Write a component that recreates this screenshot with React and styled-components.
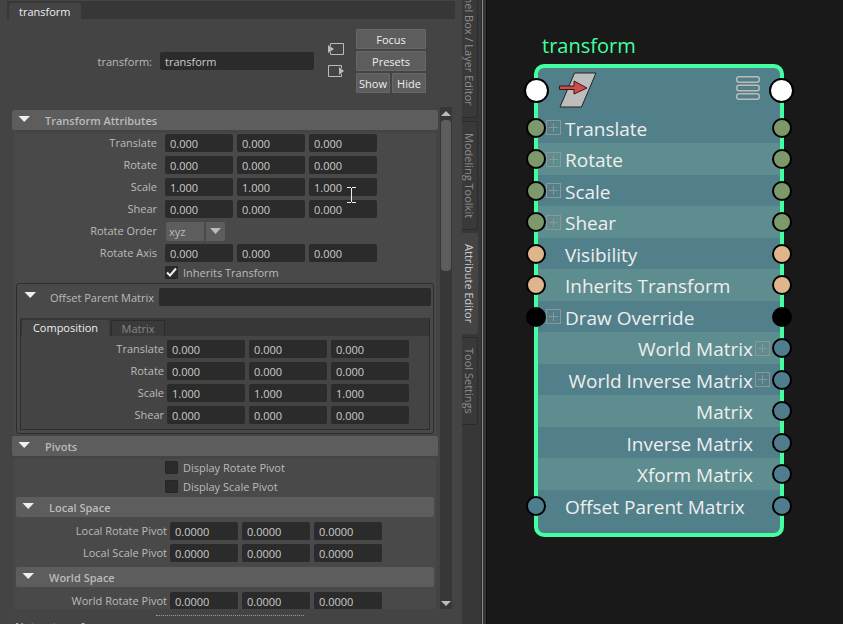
import React from 'react';
import styled, { createGlobalStyle, css } from 'styled-components';

const GlobalStyle = createGlobalStyle`
  * { box-sizing: border-box; }
  body {
    margin: 0;
    background: #191919;
    font-family: "Open Sans", "Noto Sans", sans-serif;
    font-size: 11px;
    color: #bbb;
  }
  button, input, select { font: inherit; color: inherit; margin: 0; }
`;

const Workspace = styled.main`
  display: grid;
  grid-template-columns: minmax(0, 487fr) minmax(0, 356fr);
  height: 100vh;
  overflow: hidden;
`;

const Dock = styled.section`
  display: flex;
  min-width: 0;
  min-height: 0;
  background: #444;
`;

const Editor = styled.div`
  flex: 1;
  min-width: 0;
  display: flex;
  flex-direction: column;
  padding: 1px 7px 0;
  overflow: hidden;
`;

const NodeTabs = styled.div`
  flex: none;
  height: 18px;
  padding: 2px 2px 0;
  background: #373737;
`;

const NodeTab = styled.button`
  height: 16px;
  padding: 2px 10px 0;
  border: 0;
  border-radius: 2px 2px 0 0;
  background: #444;
  color: #eee;
  line-height: 14px;
`;

const Header = styled.div`
  flex: none;
  display: flex;
  align-items: center;
  padding: 10px 29px 14px 0;
`;

const NameLabel = styled.label`
  width: 145px;
  margin-right: 8px;
  text-align: right;
`;

const Field = styled.input`
  width: ${(p) => (p.$wide ? 78 : 68)}px;
  height: 18px;
  padding: 1px 5px;
  border: 0;
  border-radius: 2px;
  background: #2b2b2b;
  color: #ccc;
  line-height: 16px;
  outline: 0;
  ${(p) =>
    p.$grow &&
    css`
      flex: 1;
      width: auto;
      min-width: 0;
    `}
`;

const ConnectionButtons = styled.div`
  display: flex;
  flex-direction: column;
  gap: 8px;
  margin: 0 12px 2px 14px;
`;

const IconButton = styled.button`
  display: block;
  padding: 0;
  border: 0;
  background: none;
  line-height: 0;
`;

const Actions = styled.div`
  display: grid;
  grid-template-columns: 34px 34px;
  grid-auto-rows: 20px;
  gap: 2px;
`;

const ActionButton = styled.button`
  grid-column: span ${(p) => p.$span || 1};
  padding: 2px 0 0;
  border: 1px solid #686868;
  border-radius: 1px;
  background: #5d5d5d;
  color: #eee;
  line-height: 16px;
`;

const Scroller = styled.div`
  flex: none;
  height: calc(100vh - 122px);
  min-height: 0;
  display: flex;
  gap: 2px;
  padding: 0 3px 0 5px;
`;

const Sections = styled.div`
  flex: 1;
  min-width: 0;
  padding-top: 3px;
  overflow: hidden;
`;

const ScrollTrack = styled.div`
  width: 12px;
  display: flex;
  flex-direction: column;
  align-items: center;
  background: #373737;
`;

const ScrollArrow = styled(IconButton)`
  height: 13px;
`;

const ScrollThumb = styled.div`
  width: 10px;
  height: 30%;
  margin-bottom: auto;
  border-radius: 4px;
  background: #5d5d5d;
`;

const SectionHeader = styled.button`
  display: flex;
  align-items: center;
  gap: 15px;
  width: 100%;
  height: 20px;
  padding: 2px 6px 0;
  border: 0;
  border-radius: 2px;
  background: #5d5d5d;
  font-weight: 600;
  line-height: 18px;
  text-align: left;
`;

const SectionBody = styled.div`
  margin: 3px 2px 2px;
  padding: ${(p) => p.$pad || '1px 0 0'};
  background: #494949;
`;

const Nested = styled.div`
  padding: 0 2px;
`;

const NestedRows = styled.div`
  padding: 5px 0 1px;
`;

const Row = styled.div`
  display: flex;
  align-items: center;
  height: 18px;
  margin-bottom: 4px;
  gap: 4px;
`;

const RowLabel = styled.label`
  width: ${(p) => p.$width}px;
  margin-right: ${(p) => p.$gap}px;
  text-align: right;
  line-height: 16px;
  white-space: nowrap;
`;

const FieldWrap = styled.div`
  position: relative;
  display: flex;
`;

const TextCursor = styled.svg`
  position: absolute;
  z-index: 1;
  left: 38px;
  top: 9px;
  pointer-events: none;
`;

const SelectWrap = styled.div`
  position: relative;
  display: flex;
  margin-left: 1px;
`;

const Select = styled.select`
  appearance: none;
  width: 59px;
  height: 19px;
  padding: 1px 3px 0;
  border: 0;
  border-radius: 2px;
  background: linear-gradient(90deg, #5d5d5d 38px, #4b4b4b 38px, #4b4b4b 40px, #5d5d5d 40px);
`;

const SelectArrow = styled.svg`
  position: absolute;
  right: 4px;
  top: 6px;
  pointer-events: none;
`;

const CheckRow = styled.label`
  display: flex;
  align-items: center;
  gap: 5px;
  height: 13px;
  margin: 0 0 ${(p) => p.$after}px 151px;
`;

const CheckWrap = styled.span`
  position: relative;
  display: flex;
`;

const CheckInput = styled.input`
  appearance: none;
  width: 13px;
  height: 13px;
  border: 1px solid #262626;
  border-radius: 1px;
  background: #2b2b2b;
  & + svg { display: none; }
  &:checked + svg { display: block; }
`;

const CheckMark = styled.svg`
  position: absolute;
  inset: 0;
  pointer-events: none;
`;

const Group = styled.div`
  margin: 0 2px;
  padding: 4px 2px 3px 3px;
  border: 1px solid #2d2d2d;
  border-radius: 3px;
`;

const GroupHeader = styled.div`
  display: flex;
  align-items: center;
  padding-left: 4px;
`;

const GroupLabel = styled.label`
  width: 109px;
  margin-left: 14px;
  white-space: nowrap;
`;

const TabBox = styled.div`
  margin: 12px 1px 0 0;
  border: 1px solid #2d2d2d;
  border-top: 0;
  background: #444;
`;

const TabStrip = styled.div`
  display: flex;
  gap: 2px;
  height: 18px;
  padding: 2px 1px 0;
  background: #373737;
`;

const Tab = styled.button`
  width: ${(p) => p.$width}px;
  padding: 0;
  border: ${(p) => (p.$active ? '0' : '1px solid #2b2b2b')};
  border-bottom: 0;
  border-radius: 2px 2px 0 0;
  background: ${(p) => (p.$active ? '#444' : '#3a3a3a')};
  color: ${(p) => (p.$active ? '#eee' : '#888')};
  line-height: 16px;
`;

const TabBody = styled.div`
  padding: 4px 0 1px;
`;

const Splitter = styled.div`
  width: 148px;
  margin: 6px auto 4px 149px;
  border-top: 1px dotted #999;
`;

const NotesLabel = styled.div`
  padding-left: 8px;
  font-weight: 600;
  line-height: 14px;
`;

const Rail = styled.div`
  flex: none;
  display: flex;
  flex-direction: column;
  width: 19px;
  padding-right: 3px;
  background: #373737;
`;

const RailTab = styled.button`
  display: flex;
  align-items: flex-end;
  justify-content: ${(p) => (p.$clipped ? 'flex-end' : 'center')};
  height: ${(p) => p.$length}px;
  margin-bottom: 3px;
  padding: ${(p) => (p.$clipped ? '0 0 11px' : '0')};
  border: 1px solid ${(p) => (p.$active ? '#444' : '#2b2b2b')};
  border-left: 0;
  border-top-width: ${(p) => (p.$clipped ? 0 : 1)}px;
  border-radius: 0 3px 3px 0;
  background: ${(p) => (p.$active ? '#444' : '#393939')};
  color: ${(p) => (p.$active ? '#ccc' : '#8c8c8c')};
  writing-mode: vertical-rl;
  white-space: nowrap;
  overflow: hidden;
  line-height: 14px;
`;

const Divider = styled.div`
  flex: none;
  width: 6px;
  background: linear-gradient(90deg, #2b2b2b 1px, #888 1px, #888 2px, #333 2px, #333 5px, #111 5px);
`;

const Graph = styled.section`
  min-width: 0;
  padding: 30px 59px 0 47px;
  background: #191919;
  font-size: 20px;
`;

const NodeTitle = styled.h1`
  margin: 0;
  padding-left: 8px;
  height: 34px;
  color: #43ffa1;
  font-size: 20px;
  font-weight: 400;
  line-height: 32px;
`;

const NodeCard = styled.article`
  padding-bottom: 12px;
  border: 4px solid #43ffa1;
  border-radius: 10px;
  background: #52808a;
`;

const NodeHeader = styled.div`
  display: flex;
  align-items: center;
  height: 44px;
`;

const Port = styled.span`
  flex: none;
  width: ${(p) => (p.$large ? 25 : 20)}px;
  height: ${(p) => (p.$large ? 25 : 20)}px;
  margin: ${(p) => (p.$large ? '0 -14px' : '0 -12px')};
  border: 2px solid #000;
  border-radius: 50%;
  background: ${(p) => p.$color};
  ${(p) => (p.$side === 'left' ? 'margin-right: 0;' : 'margin-left: 0;')}
`;

const TransformIcon = styled.svg`
  margin-left: 10px;
`;

const MenuButton = styled(IconButton)`
  margin: 0 9px 4px auto;
`;

const Attributes = styled.ul`
  margin: 0;
  padding: 0;
  list-style: none;
`;

const Attribute = styled.li`
  display: flex;
  align-items: center;
  height: 31px;
  color: #eee;
  &:nth-child(even) {
    height: 32px;
    background: #5e8d90;
  }
`;

const AttributeName = styled.span`
  flex: 1;
  min-width: 0;
  padding-top: 2px;
  text-align: ${(p) => (p.$output ? 'right' : 'left')};
  font-size: 19px;
  line-height: 28px;
  white-space: nowrap;
`;

const ExpandSlot = styled.span`
  flex: none;
  display: flex;
  width: 19px;
  padding-left: ${(p) => (p.$side === 'right' ? 2 : 0)}px;
`;

const PortGap = styled.span`
  flex: none;
  width: 8px;
`;

const Caret = ({ color = '#eee' }) => (
  <svg width="12" height="10" viewBox="0 0 12 10" aria-hidden="true">
    <path d="M0.5 0H12L6.2 6Z" fill={color} />
  </svg>
);

const Expander = ({ name }) => (
  <IconButton aria-label={`Expand ${name}`}>
    <svg width="15" height="15" viewBox="0 0 15 15" fill="none" stroke="#929597" strokeWidth="1">
      <rect x="0.5" y="0.5" width="14" height="14" />
      <path d="M7.5 3V12M3 7.5H12" />
    </svg>
  </IconButton>
);

function VectorRow({ id, label, value, labelWidth, gap, wide, cursor }) {
  return (
    <Row>
      <RowLabel htmlFor={`${id}-x`} $width={labelWidth} $gap={gap}>{label}</RowLabel>
      {['x', 'y', 'z'].map((axis) => (
        <FieldWrap key={axis}>
          <Field id={`${id}-${axis}`} aria-label={`${label} ${axis}`} defaultValue={value} $wide={wide} />
          {cursor && axis === 'z' && (
            <TextCursor width="10" height="17" viewBox="0 0 10 17" fill="none" stroke="#eee" aria-hidden="true">
              <path d="M0 0.5H4M5 0.5H9M0 15.5H4M5 15.5H9M4.5 1V15" />
            </TextCursor>
          )}
        </FieldWrap>
      ))}
    </Row>
  );
}

function Check({ label, checked, after }) {
  return (
    <CheckRow $after={after}>
      <CheckWrap>
        <CheckInput type="checkbox" defaultChecked={checked} />
        <CheckMark width="13" height="13" viewBox="0 0 13 13" fill="none" stroke="#eee" strokeWidth="2">
          <path d="M2 6.5L5 9.5L11 2.5" />
        </CheckMark>
      </CheckWrap>
      {label}
    </CheckRow>
  );
}

const GREEN = '#7d996c';
const PEACH = '#deb58c';
const BLACK = '#000';
const BLUE = '#507d8d';

const attributes = [
  { name: 'Translate', color: GREEN, input: true, expand: true },
  { name: 'Rotate', color: GREEN, input: true, expand: true },
  { name: 'Scale', color: GREEN, input: true, expand: true },
  { name: 'Shear', color: GREEN, input: true, expand: true },
  { name: 'Visibility', color: PEACH, input: true },
  { name: 'Inherits Transform', color: PEACH, input: true },
  { name: 'Draw Override', color: BLACK, input: true, expand: true },
  { name: 'World Matrix', color: BLUE, expand: true },
  { name: 'World Inverse Matrix', color: BLUE, expand: true },
  { name: 'Matrix', color: BLUE },
  { name: 'Inverse Matrix', color: BLUE },
  { name: 'Xform Matrix', color: BLUE },
  { name: 'Offset Parent Matrix', color: BLUE, input: true },
];

const railTabs = [
  { name: 'Channel Box / Layer Editor', length: 118, clipped: true },
  { name: 'Modeling Toolkit', length: 109 },
  { name: 'Attribute Editor', length: 101, active: true },
  { name: 'Tool Settings', length: 88 },
];

function AttributeEditor() {
  return (
    <Editor>
      <NodeTabs><NodeTab>transform</NodeTab></NodeTabs>
      <Header>
        <NameLabel htmlFor="node-name">transform:</NameLabel>
        <Field id="node-name" defaultValue="transform" $grow />
        <ConnectionButtons>
          <IconButton aria-label="Go to input connection">
            <svg width="16" height="14" viewBox="0 0 16 14">
              <path d="M2.5 4V1.5H15.5V12.5H2.5V10" fill="none" stroke="#bbb" />
              <path d="M0 3L6 7L0 11Z" fill="#bbb" />
            </svg>
          </IconButton>
          <IconButton aria-label="Go to output connection">
            <svg width="16" height="14" viewBox="0 0 16 14">
              <path d="M13.5 4V1.5H0.5V12.5H13.5V10" fill="none" stroke="#bbb" />
              <path d="M11 3L16 7L11 11Z" fill="#bbb" />
            </svg>
          </IconButton>
        </ConnectionButtons>
        <Actions>
          <ActionButton $span={2}>Focus</ActionButton>
          <ActionButton $span={2}>Presets</ActionButton>
          <ActionButton>Show</ActionButton>
          <ActionButton>Hide</ActionButton>
        </Actions>
      </Header>
      <Scroller>
        <Sections>
          <SectionHeader><Caret />Transform Attributes</SectionHeader>
          <SectionBody>
            <VectorRow id="translate" label="Translate" value="0.000" labelWidth={143} gap={4} />
            <VectorRow id="rotate" label="Rotate" value="0.000" labelWidth={143} gap={4} />
            <VectorRow id="scale" label="Scale" value="1.000" labelWidth={143} gap={4} cursor />
            <VectorRow id="shear" label="Shear" value="0.000" labelWidth={143} gap={4} />
            <Row>
              <RowLabel htmlFor="rotate-order" $width={143} $gap={4}>Rotate Order</RowLabel>
              <SelectWrap>
                <Select id="rotate-order"><option>xyz</option></Select>
                <SelectArrow width="11" height="6" viewBox="0 0 11 6">
                  <path d="M0 0H11L5.5 6Z" fill="#bbb" />
                </SelectArrow>
              </SelectWrap>
            </Row>
            <VectorRow id="rotate-axis" label="Rotate Axis" value="0.000" labelWidth={143} gap={4} />
            <Check label="Inherits Transform" checked after={4} />
            <Group>
              <GroupHeader>
                <Caret />
                <GroupLabel htmlFor="offset-parent">Offset Parent Matrix</GroupLabel>
                <Field id="offset-parent" $grow />
              </GroupHeader>
              <TabBox>
                <TabStrip>
                  <Tab $active $width={87}>Composition</Tab>
                  <Tab $width={54}>Matrix</Tab>
                </TabStrip>
                <TabBody>
                  <VectorRow id="opm-translate" label="Translate" value="0.000" labelWidth={143} gap={-1} wide />
                  <VectorRow id="opm-rotate" label="Rotate" value="0.000" labelWidth={143} gap={-1} wide />
                  <VectorRow id="opm-scale" label="Scale" value="1.000" labelWidth={143} gap={-1} wide />
                  <VectorRow id="opm-shear" label="Shear" value="0.000" labelWidth={143} gap={-1} wide />
                </TabBody>
              </TabBox>
            </Group>
          </SectionBody>
          <SectionHeader><Caret />Pivots</SectionHeader>
          <SectionBody $pad="2px 0 0">
            <Check label="Display Rotate Pivot" after={6} />
            <Check label="Display Scale Pivot" after={4} />
            <Nested>
              <SectionHeader><Caret />Local Space</SectionHeader>
              <NestedRows>
                <VectorRow id="local-rotate" label="Local Rotate Pivot" value="0.0000" labelWidth={151} gap={-1} />
                <VectorRow id="local-scale" label="Local Scale Pivot" value="0.0000" labelWidth={151} gap={-1} />
              </NestedRows>
              <SectionHeader><Caret />World Space</SectionHeader>
              <NestedRows>
                <VectorRow id="world-rotate" label="World Rotate Pivot" value="0.0000" labelWidth={151} gap={-1} />
              </NestedRows>
            </Nested>
          </SectionBody>
        </Sections>
        <ScrollTrack>
          <ScrollArrow aria-label="Scroll up">
            <svg width="10" height="12" viewBox="0 0 10 12"><path d="M0 8L5 3L10 8Z" fill="#bbb" /></svg>
          </ScrollArrow>
          <ScrollThumb />
          <ScrollArrow aria-label="Scroll down">
            <svg width="10" height="12" viewBox="0 0 10 12"><path d="M0 4H10L5 9Z" fill="#bbb" /></svg>
          </ScrollArrow>
        </ScrollTrack>
      </Scroller>
      <Splitter />
      <NotesLabel>Notes: transform</NotesLabel>
    </Editor>
  );
}

function NodeAttribute({ name, color, input, expand }) {
  return (
    <Attribute>
      {input ? <Port $side="left" $color={color} /> : <PortGap />}
      <ExpandSlot $side="left">{input && expand && <Expander name={name} />}</ExpandSlot>
      <AttributeName $output={!input}>{name}</AttributeName>
      <ExpandSlot $side="right">{!input && expand && <Expander name={name} />}</ExpandSlot>
      <Port $side="right" $color={color} />
    </Attribute>
  );
}

function TransformNode() {
  return (
    <Graph>
      <NodeTitle>transform</NodeTitle>
      <NodeCard>
        <NodeHeader>
          <Port $large $side="left" $color="#fff" />
          <TransformIcon width="40" height="36" viewBox="0 0 40 36" aria-hidden="true">
            <path d="M15.5 1H37L22.5 35H1Z" fill="#bdbdbd" stroke="#222" />
            <path d="M0.5 14H15V9L28 16L15 22V17.5H0.5Z" fill="#d24a4a" stroke="#3a1717" />
          </TransformIcon>
          <MenuButton aria-label="Attribute display">
            <svg width="24" height="24" viewBox="0 0 24 24" fill="none" stroke="#bdbab9" strokeWidth="1.5">
              <rect x="0.8" y="0.8" width="22.4" height="5.4" rx="2" />
              <rect x="0.8" y="9.3" width="22.4" height="5.4" rx="2" />
              <rect x="0.8" y="17.8" width="22.4" height="5.4" rx="2" />
            </svg>
          </MenuButton>
          <Port $large $side="right" $color="#fff" />
        </NodeHeader>
        <Attributes>
          {attributes.map((attribute) => (
            <NodeAttribute key={attribute.name} {...attribute} />
          ))}
        </Attributes>
      </NodeCard>
    </Graph>
  );
}

export default function App() {
  return (
    <>
      <GlobalStyle />
      <Workspace>
        <Dock>
          <AttributeEditor />
          <Rail>
            {railTabs.map((tab) => (
              <RailTab key={tab.name} $length={tab.length} $clipped={tab.clipped} $active={tab.active}>
                {tab.name}
              </RailTab>
            ))}
          </Rail>
          <Divider />
        </Dock>
        <TransformNode />
      </Workspace>
    </>
  );
}
